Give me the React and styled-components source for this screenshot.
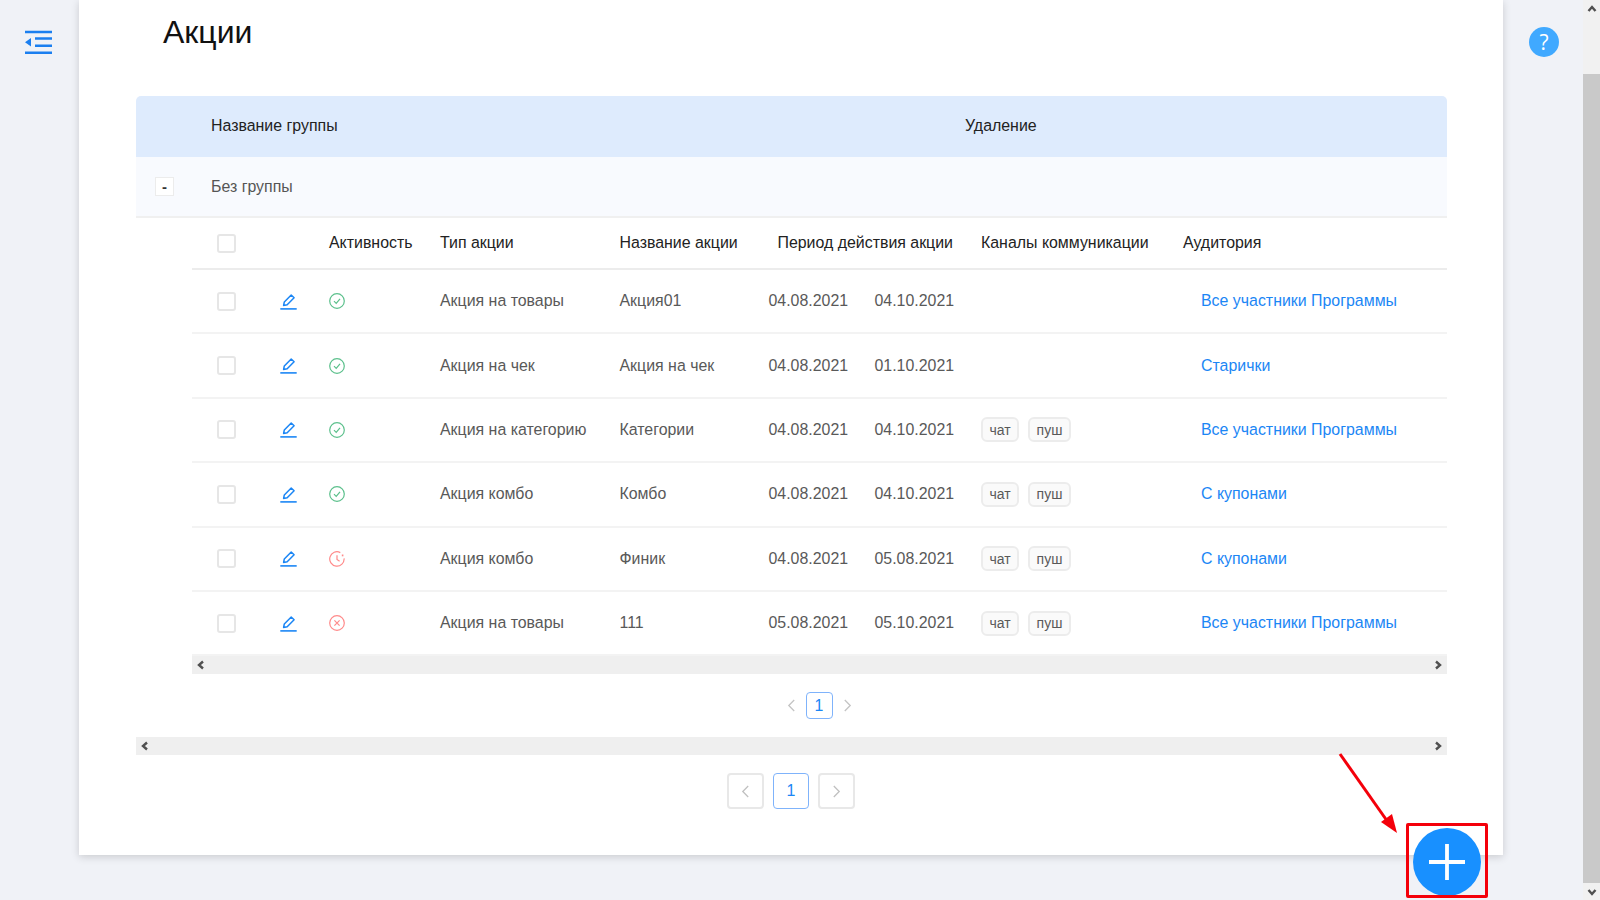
import React from 'react';
import styled, { createGlobalStyle } from 'styled-components';

const Global = createGlobalStyle`
  html, body { margin: 0; padding: 0; height: 100%; overflow: hidden; background: #f0f2f7; }
  * { box-sizing: border-box; }
  body { font-family: "Liberation Sans", Arial, sans-serif; font-size: 15.92px; color: #1f1f1f; }
`;

const Page = styled.div`
  position: relative;
  display: flex;
  width: 1600px;
  height: 900px;
  overflow: hidden;
  background: #f0f2f7;
`;
const Sidebar = styled.aside`
  width: 79px;
  flex: none;
  padding: 30px 0 0 25px;
`;
const MenuButton = styled.div`
  width: 27px;
  height: 25px;
  color: #1b7ff0;
`;
const Card = styled.main`
  width: 1424px;
  height: 855px;
  flex: none;
  background: #fff;
  padding: 0 56px 0 57px;
  box-shadow: 0 2px 8px rgba(0, 0, 0, 0.16);
`;
const Title = styled.h1`
  margin: 0;
  height: 96px;
  padding: 13px 0 0 27px;
  font-size: 32px;
  line-height: 38px;
  font-weight: 400;
  color: #111;
`;
const GroupHead = styled.div`
  display: grid;
  grid-template-columns: 75px 754px 1fr;
  align-items: center;
  height: 61px;
  padding-bottom: 2px;
  background: #deebfd;
  border-radius: 5px 5px 0 0;
  color: #222;
`;
const GroupRow = styled.div`
  display: flex;
  align-items: center;
  height: 61px;
  padding-left: 19px;
  background: #f8fafe;
  border-bottom: 2px solid #f0f0f0;
  color: #555;
`;
const Expand = styled.span`
  display: flex;
  align-items: center;
  justify-content: center;
  width: 19px;
  height: 19px;
  margin-right: 37px;
  background: #fff;
  border: 1px solid #ececec;
  font-size: 15px;
  font-weight: 700;
  color: #333;
`;
const Inner = styled.section`
  margin-left: 56px;
`;
const Row = styled.div`
  display: grid;
  grid-template-columns: 88px 49px 111px 179.5px 149px 212.5px 202px 1fr;
  align-items: center;
  height: ${p => (p.$head ? '52px' : '64.4px')};
  border-bottom: ${p => (p.$head ? '2px solid #ececec' : '2px solid #f3f3f3')};
  color: ${p => (p.$head ? '#222' : '#595959')};
`;
const CheckCell = styled.div`
  padding-left: 25px;
  display: flex;
`;
const Check = styled.span`
  width: 19px;
  height: 19px;
  background: #fff;
  border: 2px solid #e6e6e6;
  border-radius: 3px;
`;
const IconCell = styled.div`
  display: flex;
  align-items: center;
`;
const HeadPeriod = styled.div`
  text-align: right;
  padding-right: 28px;
  white-space: nowrap;
`;
const Dates = styled.div`
  display: grid;
  grid-template-columns: 106px 1fr;
`;
const Chips = styled.div`
  display: flex;
  gap: 9px;
`;
const Chip = styled.span`
  display: flex;
  align-items: center;
  justify-content: center;
  height: 25px;
  width: ${p => p.$w}px;
  background: #fafafa;
  border: 2px solid #ececec;
  border-radius: 6px;
  font-size: 14px;
  color: #595959;
`;
const AudienceLink = styled.a`
  padding-left: 18px;
  color: #1b86f5;
  white-space: nowrap;
`;
const HScroll = styled.div`
  display: flex;
  align-items: center;
  justify-content: space-between;
  height: 18px;
  padding: 0 4px;
  background: #efefef;
  color: #505050;
`;
const SmallPager = styled.nav`
  display: flex;
  align-items: center;
  justify-content: center;
  gap: 8px;
  height: 63px;
  margin-left: -1px;
  color: #c4c4c4;
`;
const SmallCurrent = styled.span`
  display: flex;
  align-items: center;
  justify-content: center;
  width: 27px;
  height: 27px;
  border: 1px solid #7fb3fb;
  border-radius: 4px;
  color: #1b86f5;
  font-size: 15.92px;
`;
const BigPager = styled.nav`
  display: flex;
  justify-content: center;
  gap: 9px;
  padding-top: 18px;
  margin-left: -1px;
`;
const PageBox = styled.span`
  display: flex;
  align-items: center;
  justify-content: center;
  width: ${p => (p.$active ? '36px' : '37px')};
  height: 36px;
  border: ${p => (p.$active ? '1px solid #7fb3fb' : '2px solid #e8e8e8')};
  border-radius: 4px;
  color: ${p => (p.$active ? '#1b86f5' : '#c0c0c0')};
  font-size: 16px;
`;
const RightRail = styled.div`
  width: 80px;
  flex: none;
  padding: 27px 0 0 26px;
`;
const Help = styled.div`
  display: flex;
  align-items: center;
  justify-content: center;
  width: 30px;
  height: 30px;
  border-radius: 50%;
  background: #40a9ff;
  color: #fff;
  font-size: 21px;
  font-family: "Open Sans", sans-serif;
  font-weight: 500;
`;
const Scrollbar = styled.div`
  width: 17px;
  flex: none;
  display: flex;
  flex-direction: column;
  background: #f1f1f1;
`;
const ScrollBtn = styled.div`
  height: 17px;
  display: flex;
  align-items: center;
  justify-content: center;
  color: #505050;
`;
const Track = styled.div`
  flex: 1;
  padding-top: 57px;
  display: flex;
`;
const Thumb = styled.div`
  flex: 1;
  background: #c9c9c9;
`;
const Fab = styled.div`
  position: absolute;
  left: 1413px;
  top: 828px;
  width: 68px;
  height: 68px;
  border-radius: 50%;
  background: #1890ff;
  color: #fff;
  display: flex;
  align-items: center;
  justify-content: center;
`;
const Highlight = styled.div`
  position: absolute;
  left: 1406px;
  top: 823px;
  width: 82px;
  height: 75px;
  border: 3px solid #f4000a;
  border-radius: 2px;
`;
const Arrow = styled.svg`
  position: absolute;
  left: 1330px;
  top: 745px;
`;

const Chevron = ({ dir, size = 10, sw = 2.4 }) => (
  <svg width={size} height={size} viewBox="0 0 10 10" fill="none" stroke="currentColor" strokeWidth={sw}>
    {dir === 'left' && <path d="M7 1.5 3 5l4 3.5" />}
    {dir === 'right' && <path d="M3 1.5 7 5 3 8.5" />}
    {dir === 'up' && <path d="M1.5 7 5 3l3.5 4" />}
    {dir === 'down' && <path d="M1.5 3 5 7l3.5-4" />}
  </svg>
);
const ThinChevron = ({ dir, size = 13 }) => (
  <svg width={size} height={size} viewBox="0 0 12 12" fill="none" stroke="currentColor" strokeWidth="1.2">
    {dir === 'left' ? <path d="M8.5 1 3.5 6l5 5" /> : <path d="M3.5 1 8.5 6l-5 5" />}
  </svg>
);
const Pencil = () => (
  <svg width="17" height="17" viewBox="0 0 17 17" fill="none" stroke="#1b86f5" strokeWidth="1.5" strokeLinejoin="round">
    <path d="M3.6 12.4 4.3 9 11.2 2l2.9 2.8-6.9 6.9z" />
    <path d="M0.3 15.9h16.4" strokeWidth="1.6" />
  </svg>
);
const Status = ({ kind }) => {
  const c = kind === 'ok' ? '#5cc08c' : '#ff8a8a';
  return (
    <svg width="16" height="16" viewBox="0 0 16 16" fill="none" stroke={c} strokeWidth="1.2">
      {kind === 'clock' ? (
        <>
          <path d="M11.3 1.6A7.2 7.2 0 1 0 15.1 7.4" />
          <path d="M8 4.2v4.2l2.6 1.8" />
          <path d="M12.8 4.4h1.6" strokeWidth="1.8" />
        </>
      ) : (
        <circle cx="8" cy="8" r="7.3" />
      )}
      {kind === 'ok' && <path d="M5 8.2 7.2 10.4 11 5.8" />}
      {kind === 'fail' && <path d="M5.4 5.4 10.6 10.6M10.6 5.4 5.4 10.6" />}
    </svg>
  );
};

const rows = [
  { st: 'ok', type: 'Акция на товары', name: 'Акция01', from: '04.08.2021', to: '04.10.2021', chips: false, aud: 'Все участники Программы' },
  { st: 'ok', type: 'Акция на чек', name: 'Акция на чек', from: '04.08.2021', to: '01.10.2021', chips: false, aud: 'Старички' },
  { st: 'ok', type: 'Акция на категорию', name: 'Категории', from: '04.08.2021', to: '04.10.2021', chips: true, aud: 'Все участники Программы' },
  { st: 'ok', type: 'Акция комбо', name: 'Комбо', from: '04.08.2021', to: '04.10.2021', chips: true, aud: 'С купонами' },
  { st: 'clock', type: 'Акция комбо', name: 'Финик', from: '04.08.2021', to: '05.08.2021', chips: true, aud: 'С купонами' },
  { st: 'fail', type: 'Акция на товары', name: '111', from: '05.08.2021', to: '05.10.2021', chips: true, aud: 'Все участники Программы' },
];

export default function App() {
  return (
    <Page>
      <Global />
      <Sidebar>
        <MenuButton>
          <svg width="27" height="25" viewBox="0 0 27 25" fill="none" stroke="currentColor" strokeWidth="2.4">
            <path d="M0 2h27M10 8.5h17M10 15.7h17M0 22.7h27" />
            <path d="M6 8v8.5L0 12.2z" fill="currentColor" stroke="none" />
          </svg>
        </MenuButton>
      </Sidebar>
      <Card>
        <Title>Акции</Title>
        <GroupHead>
          <span />
          <span>Название группы</span>
          <span>Удаление</span>
        </GroupHead>
        <GroupRow>
          <Expand>-</Expand>
          Без группы
        </GroupRow>
        <Inner>
          <Row $head>
            <CheckCell><Check /></CheckCell>
            <span />
            <span>Активность</span>
            <span>Тип акции</span>
            <span>Название акции</span>
            <HeadPeriod>Период действия акции</HeadPeriod>
            <span>Каналы коммуникации</span>
            <span>Аудитория</span>
          </Row>
          {rows.map((r, i) => (
            <Row key={i}>
              <CheckCell><Check /></CheckCell>
              <IconCell><Pencil /></IconCell>
              <IconCell><Status kind={r.st} /></IconCell>
              <span>{r.type}</span>
              <span>{r.name}</span>
              <Dates><span>{r.from}</span><span>{r.to}</span></Dates>
              {r.chips ? (
                <Chips><Chip $w={38}>чат</Chip><Chip $w={43}>пуш</Chip></Chips>
              ) : <span />}
              <AudienceLink>{r.aud}</AudienceLink>
            </Row>
          ))}
          <HScroll><Chevron dir="left" /><Chevron dir="right" /></HScroll>
          <SmallPager>
            <ThinChevron dir="left" />
            <SmallCurrent>1</SmallCurrent>
            <ThinChevron dir="right" />
          </SmallPager>
        </Inner>
        <HScroll><Chevron dir="left" /><Chevron dir="right" /></HScroll>
        <BigPager>
          <PageBox><ThinChevron dir="left" /></PageBox>
          <PageBox $active>1</PageBox>
          <PageBox><ThinChevron dir="right" /></PageBox>
        </BigPager>
      </Card>
      <RightRail>
        <Help>?</Help>
      </RightRail>
      <Scrollbar>
        <ScrollBtn><Chevron dir="up" /></ScrollBtn>
        <Track><Thumb /></Track>
        <ScrollBtn><Chevron dir="down" /></ScrollBtn>
      </Scrollbar>
      <Arrow width="80" height="100" viewBox="0 0 80 100" fill="none">
        <path d="M10 9 60 80" stroke="#f4000a" strokeWidth="3" />
        <path d="M67 88 51 77 62 69z" fill="#f4000a" />
      </Arrow>
      <Fab>
        <svg width="36" height="36" viewBox="0 0 36 36" stroke="currentColor" strokeWidth="3.8">
          <path d="M18 0v36M0 18h36" />
        </svg>
      </Fab>
      <Highlight />
    </Page>
  );
}
